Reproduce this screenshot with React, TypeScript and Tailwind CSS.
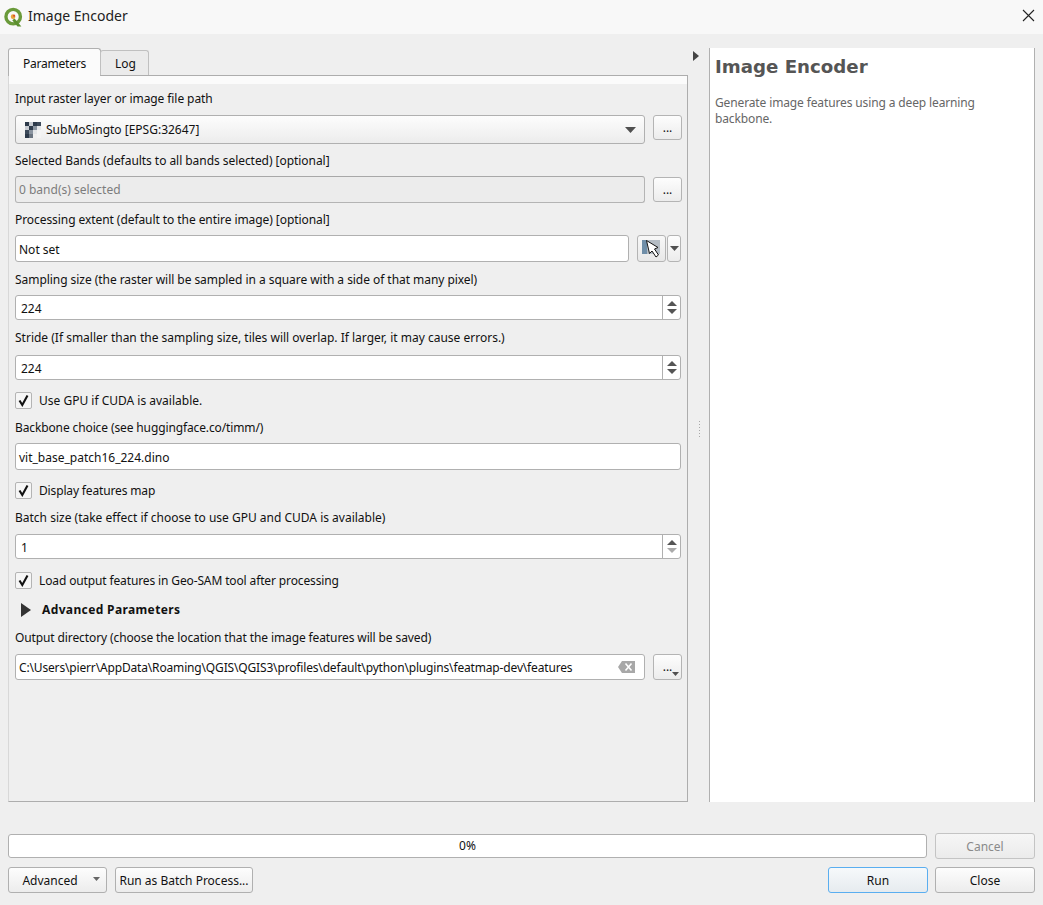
import React from "react";

const Label = ({ children, cls = "" }: { children: React.ReactNode; cls?: string }) => (
  <div className={`h-[16px] leading-[16px] text-[12px] text-[#111] whitespace-nowrap ${cls}`}>{children}</div>
);

const SmallBtn = ({ cls = "", children }: { cls?: string; children: React.ReactNode }) => (
  <div className={`w-[29px] rounded-[3px] border border-[#b4b4b4] bg-linear-to-b from-[#fdfdfd] to-[#ececec] flex items-center justify-center text-[12px] text-[#111] ${cls}`}>{children}</div>
);

const Tri = ({ dir = "down", color = "#505050", w = 12, h = 7 }: { dir?: "down" | "up" | "right"; color?: string; w?: number; h?: number }) => (
  <svg width={w} height={h} viewBox="0 0 12 7" preserveAspectRatio="none" className="block">
    {dir === "down" && <polygon points="0,0 12,0 6,7" fill={color} />}
    {dir === "up" && <polygon points="0,7 12,7 6,0" fill={color} />}
    {dir === "right" && <polygon points="0,0 12,3.5 0,7" fill={color} />}
  </svg>
);

const Spin = ({ value, downDisabled, cls = "mt-[7px]" }: { value: string; downDisabled?: boolean; cls?: string }) => (
  <div className={`h-[25px] w-[666px] rounded-[3px] border border-[#b0b0b0] bg-white flex items-stretch text-[12px] text-[#111] ${cls}`}>
    <div className="flex-1 pl-[5px] leading-[26px]">{value}</div>
    <div className="w-[18px] border-l border-[#b0b0b0] flex flex-col items-center justify-center gap-[3px]">
      <Tri dir="up" w={10} h={5} color="#555" />
      <Tri dir="down" w={10} h={5} color={downDisabled ? "#aaa" : "#555"} />
    </div>
  </div>
);

const Check = ({ label, cls = "", textCls = "" }: { label: string; cls?: string; textCls?: string }) => (
  <div className={`flex items-center h-[18px] ${cls}`}>
    <div className="w-[17px] h-[17px] rounded-[2px] border border-[#b4b4b4] bg-[#f6f6f6] flex items-center justify-center">
      <svg width="13" height="13" viewBox="0 0 13 13">
        <path d="M2.5 6.5 L5.3 11 L10.5 1.5" fill="none" stroke="#111" strokeWidth="2.1" />
      </svg>
    </div>
    <span className={`ml-[7px] pt-[2px] text-[12px] text-[#111] whitespace-nowrap ${textCls}`}>{label}</span>
  </div>
);

const Footer = ({ cls = "", children, dis, blue }: { cls?: string; children: React.ReactNode; dis?: boolean; blue?: boolean }) => (
  <div className={`rounded-[3px] border flex items-center justify-center text-[12px] pt-[2px] ${blue ? "border-[#5aaef0] bg-linear-to-b from-[#f6f9fb] to-[#e6ebef]" : dis ? "border-[#c4c4c4] bg-linear-to-b from-[#f6f6f6] to-[#ebebeb]" : "border-[#b0b0b0] bg-linear-to-b from-[#fdfdfd] to-[#ececec]"} ${dis ? "text-[#8a8a8a]" : "text-[#111]"} ${cls}`}>{children}</div>
);

const Logo = () => (
  <svg width="21" height="21" viewBox="0 0 20 20" className="block">
    <circle cx="9.7" cy="9.2" r="6.9" fill="none" stroke="#6a9a3a" strokeWidth="3.2" />
    <path d="M11 11 L17.5 18.5 L13.8 18.5 L8.8 12.5 Z" fill="#5c8f2f" />
    <circle cx="9.6" cy="9.2" r="2.2" fill="#e8a33a" />
    <circle cx="10.6" cy="8.4" r="1" fill="#d8452c" />
  </svg>
);

export default function App() {
  return (
    <div className="w-[1043px] h-[905px] bg-[#efefef] overflow-hidden flex flex-col [font-family:'Noto_Sans',sans-serif]">
      {/* title bar */}
      <div className="h-[34px] bg-[#f8f8f8] flex items-center pl-[3px] pr-[8px]">
        <Logo />
        <span className="ml-[4px] -mt-[4px] text-[14px] text-[#222]">Image Encoder</span>
        <svg width="13" height="13" viewBox="0 0 13 13" className="ml-auto -mt-[4px]">
          <path d="M1 1 L12 12 M12 1 L1 12" stroke="#222" strokeWidth="1.1" />
        </svg>
      </div>

      {/* main */}
      <div className="flex pl-[8px] pt-[14px] h-[768px]">
        <div className="w-[680px] flex flex-col">
          {/* tabs */}
          <div className="flex items-end h-[27px] relative z-10">
            <div className="w-[93px] h-[28px] -mb-px pt-[2px] rounded-t-[3px] border border-b-0 border-[#b0b0b0] bg-[#fbfbfb] text-[12px] tracking-[-0.2px] text-[#111] flex items-center justify-center">Parameters</div>
            <div className="w-[49px] h-[25px] pt-[2px] rounded-t-[3px] border border-b-0 border-[#c0c0c0] bg-[#ebebeb] text-[12px] text-[#111] flex items-center justify-center ml-[-1px] pl-[2px]">Log</div>
          </div>
          {/* pane */}
          <div className="w-[680px] h-[727px] border border-[#adadad] border-l-[#d8d8d8] flex flex-col">
            <div className="h-[8px] bg-[#fbfbfb]" />
            <div className="pl-[6px] flex flex-col">
              <Label cls="mt-[7px] tracking-[-0.08px]">Input raster layer or image file path</Label>
              <div className="mt-[8px] flex items-start">
                <div className="w-[630px] h-[29px] rounded-[3px] border border-[#b0b0b0] bg-linear-to-b from-[#fdfdfd] to-[#ececec] flex items-center pl-[9px] pr-[8px]">
                  <svg width="16" height="16" viewBox="0 0 4 4" className="block" shapeRendering="crispEdges">
                    <rect x="0" y="0" width="1" height="1" fill="#2d3a4a" />
                    <rect x="1" y="0" width="1" height="1" fill="#c8ccd2" />
                    <rect x="2" y="0" width="1" height="1" fill="#2d3a4a" />
                    <rect x="3" y="0" width="1" height="1" fill="#3d4a5a" />
                    <rect x="0" y="1" width="1" height="1" fill="#c8ccd2" />
                    <rect x="1" y="1" width="1" height="1" fill="#2d3a4a" />
                    <rect x="2" y="1" width="1" height="1" fill="#8a94a0" />
                    <rect x="3" y="1" width="1" height="1" fill="#e4e6e8" />
                    <rect x="0" y="2" width="1" height="1" fill="#3d4a5a" />
                    <rect x="1" y="2" width="1" height="1" fill="#8a94a0" />
                    <rect x="2" y="2" width="1" height="1" fill="#e4e6e8" />
                    <rect x="3" y="2" width="1" height="1" fill="#f4f4f4" />
                    <rect x="0" y="3" width="1" height="1" fill="#2d3a4a" />
                    <rect x="1" y="3" width="1" height="1" fill="#6a7480" />
                    <rect x="2" y="3" width="1" height="1" fill="#f0f0f0" />
                    <rect x="3" y="3" width="1" height="1" fill="#f4f4f4" />
                  </svg>
                  <span className="ml-[5px] text-[12px] text-[#111]">SubMoSingto [EPSG:32647]</span>
                  <div className="ml-auto"><Tri w={11} h={6} /></div>
                </div>
                <SmallBtn cls="ml-[8px] h-[25px]">...</SmallBtn>
              </div>

              <Label cls="mt-[8px] pt-[1px] tracking-[-0.05px]">Selected Bands (defaults to all bands selected) [optional]</Label>
              <div className="mt-[8px] flex items-start">
                <div className="w-[630px] h-[27px] rounded-[3px] border border-[#b4b4b4] border-t-[#a8a8a8] bg-[#ececec] pl-[3px] leading-[25px] text-[12px] text-[#7c7c7c]">0 band(s) selected</div>
                <SmallBtn cls="ml-[8px] h-[25px] mt-[1px]">...</SmallBtn>
              </div>

              <Label cls="mt-[8px] pt-[1px] tracking-[-0.07px]">Processing extent (default to the entire image) [optional]</Label>
              <div className="mt-[8px] flex items-start">
                <div className="w-[614px] h-[27px] rounded-[3px] border border-[#b0b0b0] bg-white pl-[3px] leading-[27px] text-[12px] text-[#111]">Not set</div>
                <div className="ml-[8px] w-[29px] h-[27px] rounded-[3px] border border-[#b4b4b4] bg-linear-to-b from-[#f8f8f8] to-[#e8e8e8] flex items-center justify-center">
                  <svg width="23" height="23" viewBox="0 0 23 23">
                    <rect x="2" y="3" width="18" height="14" fill="#b4bcc4" />
                    <rect x="2" y="3" width="5" height="14" fill="#6f8ea8" />
                    <path d="M6.5 3.5 L9.5 16.5 L12 14 L16 20 L18.5 18 L14.5 12 L18 10.5 Z" fill="#fff" stroke="#111" strokeWidth="1" />
                  </svg>
                </div>
                <div className="ml-[1px] w-[14px] h-[27px] rounded-[3px] border border-[#b4b4b4] bg-linear-to-b from-[#fdfdfd] to-[#ececec] flex items-center justify-center">
                  <Tri w={9} h={5} />
                </div>
              </div>

              <Label cls="mt-[10px] tracking-[-0.05px]">Sampling size (the raster will be sampled in a square with a side of that many pixel)</Label>
              <Spin value="224" />
              <Label cls="mt-[10px]">Stride (If smaller than the sampling size, tiles will overlap. If larger, it may cause errors.)</Label>
              <Spin value="224" cls="mt-[9px]" />
              <Check label="Use GPU if CUDA is available." cls="mt-[11px]" />
              <Label cls="mt-[11px] tracking-[-0.12px]">Backbone choice (see huggingface.co/timm/)</Label>
              <div className="mt-[7px] w-[666px] h-[27px] rounded-[3px] border border-[#b0b0b0] bg-white pl-[3px] leading-[27px] text-[12px] text-[#111]">vit_base_patch16_224.dino</div>
              <Check label="Display features map" cls="mt-[11px]" textCls="tracking-[-0.15px]" />
              <Label cls="mt-[11px]">Batch size (take effect if choose to use GPU and CUDA is available)</Label>
              <Spin value="1" downDisabled cls="mt-[8px]" />
              <Check label="Load output features in Geo-SAM tool after processing" cls="mt-[12px]" textCls="tracking-[-0.13px]" />
              <div className="mt-[13px] h-[16px] flex items-center pl-[6px]">
                <Tri dir="right" w={10} h={14} color="#333" />
                <span className="ml-[11px] text-[12px] font-bold tracking-[0.37px] text-[#111]">Advanced Parameters</span>
              </div>
              <Label cls="mt-[12px] tracking-[-0.11px]">Output directory (choose the location that the image features will be saved)</Label>
              <div className="mt-[8px] flex items-start">
                <div className="w-[630px] h-[26px] rounded-[3px] border border-[#b0b0b0] bg-white pl-[3px] pr-[9px] flex items-center text-[12px] text-[#111]">
                  <span className="whitespace-nowrap pt-[2px] tracking-[-0.16px]">C:\Users\pierr\AppData\Roaming\QGIS\QGIS3\profiles\default\python\plugins\featmap-dev\features</span>
                  <svg width="17" height="12" viewBox="0 0 17 12" className="ml-auto">
                    <path d="M4 0 H17 V12 H4 L0 6 Z" fill="#a8a8a8" />
                    <path d="M7.5 2.5 L13.5 9.5 M13.5 2.5 L7.5 9.5" stroke="#fff" strokeWidth="1.6" />
                  </svg>
                </div>
                <div className="ml-[8px] w-[29px] h-[26px] rounded-[3px] border border-[#b4b4b4] bg-linear-to-b from-[#fdfdfd] to-[#ececec] relative text-[12px] text-[#111] flex items-center justify-center">
                  ...
                  <div className="absolute right-[2px] bottom-[3px]"><Tri w={7} h={4} /></div>
                </div>
              </div>
            </div>
          </div>
        </div>

        {/* splitter */}
        <div className="w-[21px] relative flex flex-col items-center">
          <div className="mt-[3px] ml-[-5px]"><Tri dir="right" w={6} h={10} color="#444" /></div>
          <div className="mt-[360px] ml-[2px] flex flex-col gap-[2px]">
            {[0, 1, 2, 3, 4, 5].map((i) => (
              <div key={i} className="w-[1px] h-[1px] bg-[#a8a8a8]" />
            ))}
          </div>
        </div>

        {/* help */}
        <div className="w-[326px] h-[754px] bg-white border-l border-r border-[#b0b0b0] pl-[5px] pt-[6px]">
          <div className="[font-family:'DejaVu_Sans',sans-serif] font-bold text-[18.2px] leading-[26px] text-[#555]">Image Encoder</div>
          <div className="mt-[15px] w-[280px] text-[12px] leading-[16px] tracking-[-0.13px] text-[#666]">Generate image features using a deep learning backbone.</div>
        </div>
      </div>

      {/* bottom */}
      <div className="mt-[31px] pl-[8px] pr-[8px] flex items-center gap-[8px]">
        <div className="w-[919px] h-[24px] rounded-[3px] border border-[#b0b0b0] bg-white flex items-center justify-center text-[12px] text-[#111]">0%</div>
        <Footer dis cls="w-[100px] h-[26px]">Cancel</Footer>
      </div>
      <div className="mt-[8px] pl-[8px] pr-[8px] flex items-center">
        <Footer cls="w-[99px] h-[26px] relative">
          <span className="mr-[15px]">Advanced</span>
          <div className="absolute right-[6px] top-[9px]"><Tri w={7} h={4} color="#666" /></div>
        </Footer>
        <Footer cls="ml-[8px] w-[138px] h-[26px]">Run as Batch Process...</Footer>
        <Footer blue cls="ml-auto w-[100px] h-[26px]">Run</Footer>
        <Footer cls="ml-[7px] w-[100px] h-[26px]">Close</Footer>
      </div>
    </div>
  );
}
